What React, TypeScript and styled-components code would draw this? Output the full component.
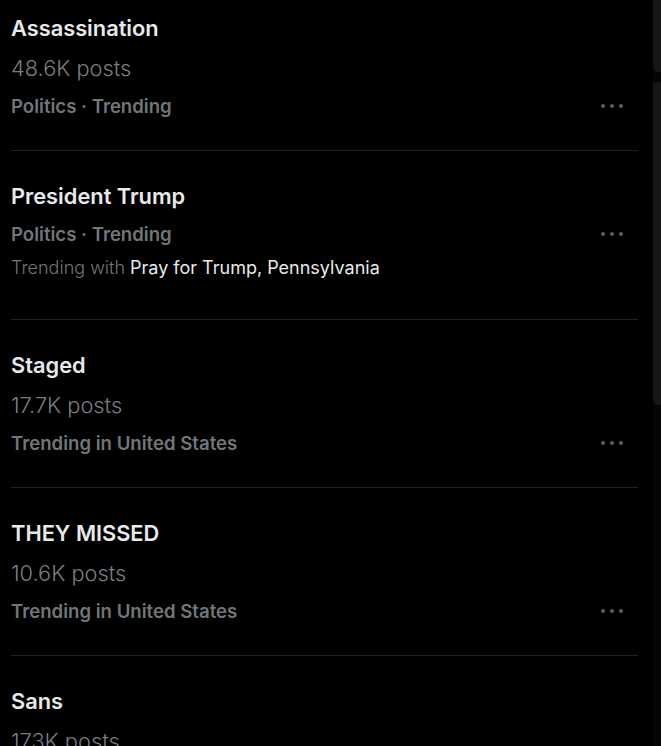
import React from "react";
import styled, { createGlobalStyle } from "styled-components";

const Global = createGlobalStyle`
  html, body { margin: 0; padding: 0; background: #000; }
  body { width: 661px; height: 746px; overflow: hidden; font-family: Inter, Roboto, "Liberation Sans", sans-serif; }
`;

const Page = styled.div`
  display: flex;
  width: 661px;
  height: 746px;
  background: #000;
  overflow: hidden;
`;

const Feed = styled.div`
  flex: 1;
  display: flex;
  flex-direction: column;
  margin-top: -17px;
  padding-left: 11px;
  padding-right: 15px;
`;

const Item = styled.div<{ $last?: boolean }>`
  display: flex;
  flex-direction: column;
  padding: 25px 0 26px;
  border-bottom: ${(p) => (p.$last ? "none" : "1px solid #1f2124")};
`;

const Title = styled.div`
  height: 40px;
  line-height: 40px;
  font-size: 21.8px;
  font-weight: 600;
  color: #e7e9ea;
`;

const Posts = styled.div`
  height: 40px;
  line-height: 40px;
  font-size: 21.8px;
  font-weight: 300;
  color: #7a7e82;
`;

const MetaRow = styled.div`
  display: flex;
  align-items: center;
  justify-content: space-between;
  height: 36px;
`;

const Meta = styled.span`
  font-size: 18.6px;
  font-weight: 600;
  color: #71767b;
`;

const Dots = styled.div`
  display: flex;
  gap: 4.5px;
  margin-right: 15px;
`;

const Dot = styled.span`
  width: 4.5px;
  height: 4.5px;
  border-radius: 50%;
  background: #5c5f63;
`;

const With = styled.div`
  height: 32px;
  line-height: 32px;
  margin-bottom: 9px;
  font-size: 18px;
  font-weight: 300;
  color: #71767b;
`;

const WithTopics = styled.span`
  color: #e7e9ea;
  font-weight: 400;
`;

const ScrollTrack = styled.div`
  width: 8px;
  display: flex;
  flex-direction: column;
  gap: 10px;
  background: #050505;
`;

const Thumb = styled.div<{ $h: number }>`
  height: ${(p) => p.$h}px;
  background: #161616;
  border-radius: 0 0 0 6px;
`;

type Trend = {
  title: string;
  posts?: string;
  meta: string;
  withTopics?: string;
};

const trends: Trend[] = [
  { title: "Assassination", posts: "48.6K posts", meta: "Politics · Trending" },
  { title: "President Trump", meta: "Politics · Trending", withTopics: "Pray for Trump, Pennsylvania" },
  { title: "Staged", posts: "17.7K posts", meta: "Trending in United States" },
  { title: "THEY MISSED", posts: "10.6K posts", meta: "Trending in United States" },
  { title: "Sans", posts: "173K posts", meta: "Trending in United States" },
];

export default function App() {
  return (
    <Page>
      <Global />
      <Feed>
        {trends.map((t, i) => (
          <Item key={t.title} $last={i === trends.length - 1}>
            <Title>{t.title}</Title>
            {t.posts && <Posts>{t.posts}</Posts>}
            <MetaRow>
              <Meta>{t.meta}</Meta>
              <Dots>
                <Dot />
                <Dot />
                <Dot />
              </Dots>
            </MetaRow>
            {t.withTopics && (
              <With>
                Trending with <WithTopics>{t.withTopics}</WithTopics>
              </With>
            )}
          </Item>
        ))}
      </Feed>
      <ScrollTrack>
        <Thumb $h={72} />
        <Thumb $h={323} />
      </ScrollTrack>
    </Page>
  );
}
